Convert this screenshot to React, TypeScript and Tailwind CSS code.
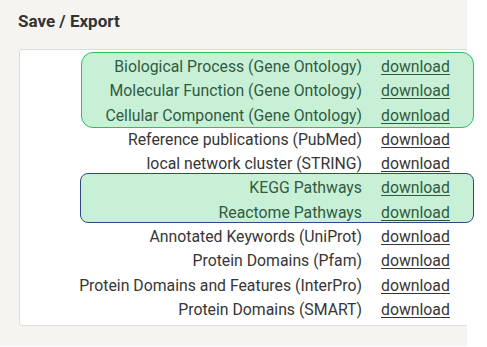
import React from "react";

const rows = [
  "Biological Process (Gene Ontology)",
  "Molecular Function (Gene Ontology)",
  "Cellular Component (Gene Ontology)",
  "Reference publications (PubMed)",
  "local network cluster (STRING)",
  "KEGG Pathways",
  "Reactome Pathways",
  "Annotated Keywords (UniProt)",
  "Protein Domains (Pfam)",
  "Protein Domains and Features (InterPro)",
  "Protein Domains (SMART)",
];

export default function App() {
  return (
    <div
      className="relative w-[487px] h-[347px] bg-white overflow-hidden text-[#363636]"
      style={{ fontFamily: "Roboto, 'Liberation Sans', sans-serif" }}
    >
      <div className="w-[467px] h-[346px] bg-[#f5f4f1] overflow-hidden pt-[9px]">
        <div className="pl-[18px] text-[17px] font-bold leading-[25px] text-[#333]">
          Save / Export
        </div>
        <div className="mt-[15px] ml-[19px] w-[480px] h-[277px] bg-white border border-[#dcdcdc] rounded-[3px] pt-[5px]">
          <div className="grid grid-cols-[342px_auto] gap-x-[19px] text-[15.8px] leading-[24.3px]">
            {rows.map((r) => (
              <React.Fragment key={r}>
                <div className="text-right whitespace-nowrap">{r}</div>
                <div>
                  <a href="#" className="underline underline-offset-2 text-[#363636]">
                    download
                  </a>
                </div>
              </React.Fragment>
            ))}
          </div>
        </div>
      </div>
      <div className="absolute left-[81px] top-[52px] w-[393px] h-[76px] rounded-[12px] border border-[#22c55e] bg-[rgba(34,197,94,0.25)]" />
      <div className="absolute left-[80px] top-[173px] w-[394px] h-[50px] rounded-[8px] border border-[#2d4a86] bg-[rgba(34,197,94,0.25)]" />
    </div>
  );
}
